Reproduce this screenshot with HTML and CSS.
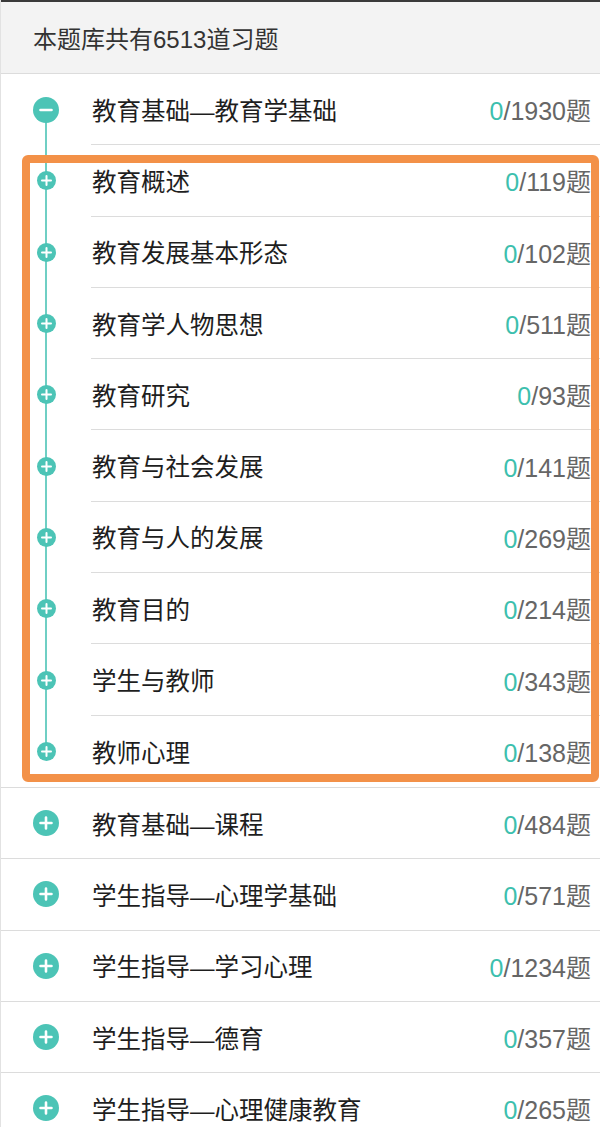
FILE: index.html
```html
<!DOCTYPE html>
<html lang="zh-CN">
<head>
  <meta charset="UTF-8">
  <title>题库</title>
  <link rel="stylesheet" href="styles.css">
</head>
<body>

  <div class="page">
    <div class="header">本题库共有6513道习题</div>

    <ul class="tree">
      <li class="group open">
        <div class="row parent">
          <div class="icon-cell">
            <svg class="icon big" viewBox="0 0 26 26"><circle cx="13" cy="13" r="13"/><path d="M7.5 13h11"/></svg>
          </div>
          <div class="body"><span class="name">教育基础—教育学基础</span><span class="count"><b>0</b>/1930题</span></div>
        </div>
        <ul class="children">
          <li class="row child">
            <div class="icon-cell"><svg class="icon small" viewBox="0 0 19 19"><circle cx="9.5" cy="9.5" r="9.5"/><path d="M5 9.5h9M9.5 5v9"/></svg></div>
            <div class="body"><span class="name">教育概述</span><span class="count"><b>0</b>/119题</span></div>
          </li>
          <li class="row child">
            <div class="icon-cell"><svg class="icon small" viewBox="0 0 19 19"><circle cx="9.5" cy="9.5" r="9.5"/><path d="M5 9.5h9M9.5 5v9"/></svg></div>
            <div class="body"><span class="name">教育发展基本形态</span><span class="count"><b>0</b>/102题</span></div>
          </li>
          <li class="row child">
            <div class="icon-cell"><svg class="icon small" viewBox="0 0 19 19"><circle cx="9.5" cy="9.5" r="9.5"/><path d="M5 9.5h9M9.5 5v9"/></svg></div>
            <div class="body"><span class="name">教育学人物思想</span><span class="count"><b>0</b>/511题</span></div>
          </li>
          <li class="row child">
            <div class="icon-cell"><svg class="icon small" viewBox="0 0 19 19"><circle cx="9.5" cy="9.5" r="9.5"/><path d="M5 9.5h9M9.5 5v9"/></svg></div>
            <div class="body"><span class="name">教育研究</span><span class="count"><b>0</b>/93题</span></div>
          </li>
          <li class="row child">
            <div class="icon-cell"><svg class="icon small" viewBox="0 0 19 19"><circle cx="9.5" cy="9.5" r="9.5"/><path d="M5 9.5h9M9.5 5v9"/></svg></div>
            <div class="body"><span class="name">教育与社会发展</span><span class="count"><b>0</b>/141题</span></div>
          </li>
          <li class="row child">
            <div class="icon-cell"><svg class="icon small" viewBox="0 0 19 19"><circle cx="9.5" cy="9.5" r="9.5"/><path d="M5 9.5h9M9.5 5v9"/></svg></div>
            <div class="body"><span class="name">教育与人的发展</span><span class="count"><b>0</b>/269题</span></div>
          </li>
          <li class="row child">
            <div class="icon-cell"><svg class="icon small" viewBox="0 0 19 19"><circle cx="9.5" cy="9.5" r="9.5"/><path d="M5 9.5h9M9.5 5v9"/></svg></div>
            <div class="body"><span class="name">教育目的</span><span class="count"><b>0</b>/214题</span></div>
          </li>
          <li class="row child">
            <div class="icon-cell"><svg class="icon small" viewBox="0 0 19 19"><circle cx="9.5" cy="9.5" r="9.5"/><path d="M5 9.5h9M9.5 5v9"/></svg></div>
            <div class="body"><span class="name">学生与教师</span><span class="count"><b>0</b>/343题</span></div>
          </li>
          <li class="row child">
            <div class="icon-cell"><svg class="icon small" viewBox="0 0 19 19"><circle cx="9.5" cy="9.5" r="9.5"/><path d="M5 9.5h9M9.5 5v9"/></svg></div>
            <div class="body"><span class="name">教师心理</span><span class="count"><b>0</b>/138题</span></div>
          </li>
        </ul>
      </li>

      <li class="group">
        <div class="row parent">
          <div class="icon-cell"><svg class="icon big" viewBox="0 0 26 26"><circle cx="13" cy="13" r="13"/><path d="M7.5 13h11M13 7.5v11"/></svg></div>
          <div class="body"><span class="name">教育基础—课程</span><span class="count"><b>0</b>/484题</span></div>
        </div>
      </li>
      <li class="group">
        <div class="row parent">
          <div class="icon-cell"><svg class="icon big" viewBox="0 0 26 26"><circle cx="13" cy="13" r="13"/><path d="M7.5 13h11M13 7.5v11"/></svg></div>
          <div class="body"><span class="name">学生指导—心理学基础</span><span class="count"><b>0</b>/571题</span></div>
        </div>
      </li>
      <li class="group">
        <div class="row parent">
          <div class="icon-cell"><svg class="icon big" viewBox="0 0 26 26"><circle cx="13" cy="13" r="13"/><path d="M7.5 13h11M13 7.5v11"/></svg></div>
          <div class="body"><span class="name">学生指导—学习心理</span><span class="count"><b>0</b>/1234题</span></div>
        </div>
      </li>
      <li class="group">
        <div class="row parent">
          <div class="icon-cell"><svg class="icon big" viewBox="0 0 26 26"><circle cx="13" cy="13" r="13"/><path d="M7.5 13h11M13 7.5v11"/></svg></div>
          <div class="body"><span class="name">学生指导—德育</span><span class="count"><b>0</b>/357题</span></div>
        </div>
      </li>
      <li class="group">
        <div class="row parent">
          <div class="icon-cell"><svg class="icon big" viewBox="0 0 26 26"><circle cx="13" cy="13" r="13"/><path d="M7.5 13h11M13 7.5v11"/></svg></div>
          <div class="body"><span class="name">学生指导—心理健康教育</span><span class="count"><b>0</b>/265题</span></div>
        </div>
      </li>
    </ul>

    <!-- marcação laranja sobre os subitens -->
    <div class="highlight"></div>
  </div>

</body>
</html>
```

FILE: styles.css
```css
* { margin: 0; padding: 0; box-sizing: border-box; }

body {
  font-family: 'Liberation Sans', 'Noto Sans CJK SC', sans-serif;
  background: white;
  color: #1e1e1e;
}

.page {
  position: relative;
  width: 600px;
  height: 1127px;
  overflow: hidden;
  border-left: 1px solid #e2e2e2;
}

.header {
  height: 74px;
  background-color: #f3f3f3;
  border-top: 2px solid #3a3a3a;
  border-bottom: 1px solid #dcdcdc;
  padding-left: 32px;
  display: flex;
  align-items: center;
  font-size: 24px;
  color: #333;
}

.tree, .children {
  list-style: none;
}

.group {
  border-bottom: 1px solid #dcdcdc;
}

.row {
  display: flex;
  align-items: stretch;
  height: 71.3px;
}

/* a borda do grupo já soma 1px */
.group > .parent { height: 70.3px; }
.group.open > .parent { height: 71.3px; }

.icon-cell {
  position: relative;
  width: 90px;
  flex-shrink: 0;
  display: flex;
  align-items: center;
  justify-content: center;
}

.icon {
  position: relative;
  z-index: 1;
  display: block;
}

.icon circle { fill: #4cc4b6; }
.icon path { stroke: white; fill: none; stroke-linecap: round; }

.icon.big { width: 26px; height: 26px; }
.icon.big path { stroke-width: 2.6; }

.icon.small { width: 19px; height: 19px; }
.icon.small path { stroke-width: 2; }

/* linha vertical que liga o grupo aberto aos filhos */
.open > .parent .icon-cell::after,
.child .icon-cell::after {
  content: '';
  position: absolute;
  left: 44px;
  width: 2px;
  background-color: #6fcfc4;
}

.open > .parent .icon-cell::after { top: 50%; bottom: 0; }
.child .icon-cell::after { top: 0; bottom: 0; }
.child:last-child .icon-cell::after { bottom: 50%; }

.body {
  flex: 1;
  display: flex;
  align-items: center;
  justify-content: space-between;
  padding: 0 9px 0 1px;
  font-size: 24.5px;
}

.open > .parent .body,
.child .body {
  border-bottom: 1px solid #dcdcdc;
}

.child:last-child .body {
  border-bottom: none;
}

.name {
  color: #1e1e1e;
}

.count {
  color: #666;
  font-size: 25px;
}

.count b {
  font-weight: normal;
  color: #3dbfae;
}

.highlight {
  position: absolute;
  left: 21px;
  top: 155px;
  width: 577px;
  height: 627px;
  border: 8px solid #f39148;
  border-radius: 6px;
  pointer-events: none;
}
```
